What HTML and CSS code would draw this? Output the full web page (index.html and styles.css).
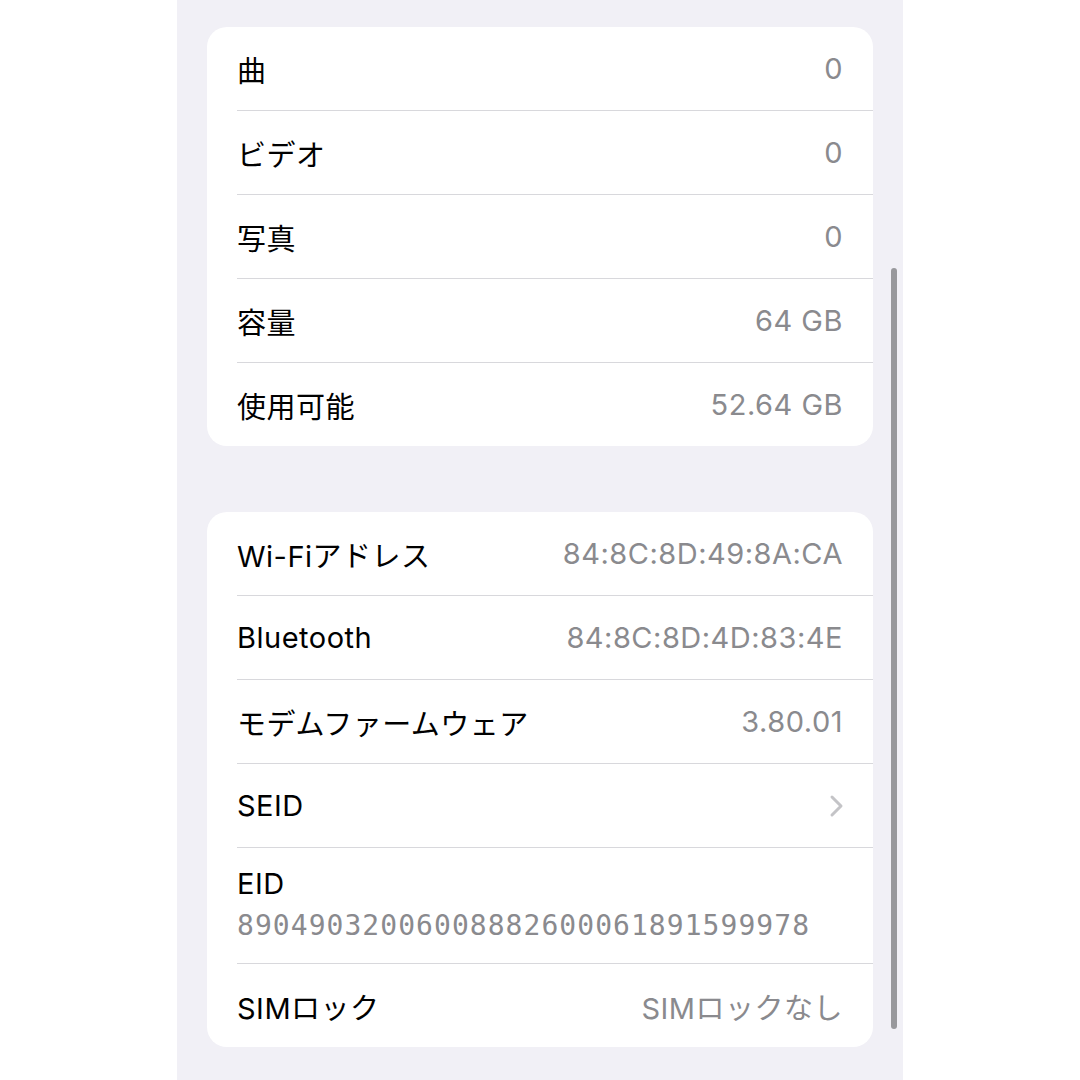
FILE: index.html
```html
<!DOCTYPE html>
<html lang="ja">
<head>
<meta charset="utf-8">
<link rel="stylesheet" href="styles.css">
</head>
<body>
<div class="panel">
  <div class="card">
    <div class="row"><span class="label">曲</span><span class="value">0</span></div>
    <div class="row"><span class="label">ビデオ</span><span class="value">0</span></div>
    <div class="row"><span class="label">写真</span><span class="value">0</span></div>
    <div class="row"><span class="label">容量</span><span class="value">64 GB</span></div>
    <div class="row"><span class="label">使用可能</span><span class="value">52.64 GB</span></div>
  </div>
  <div class="card">
    <div class="row"><span class="label">Wi-Fiアドレス</span><span class="value">84:8C:8D:49:8A:CA</span></div>
    <div class="row"><span class="label">Bluetooth</span><span class="value">84:8C:8D:4D:83:4E</span></div>
    <div class="row"><span class="label">モデムファームウェア</span><span class="value">3.80.01</span></div>
    <div class="row"><span class="label">SEID</span><svg class="chevron" width="16" height="24" viewBox="0 0 16 24"><path d="M3 3 L12 12 L3 21" fill="none" stroke="#c4c4c7" stroke-width="3" stroke-linecap="round" stroke-linejoin="round"/></svg></div>
    <div class="row tall"><span class="label">EID</span><span class="mono">89049032006008882600061891599978</span></div>
    <div class="row"><span class="label">SIMロック</span><span class="value">SIMロックなし</span></div>
  </div>
  <div class="scrollbar"></div>
</div>
</body>
</html>
```

FILE: styles.css
```css
html, body {
  margin: 0;
  padding: 0;
  background: #ffffff;
}
body {
  width: 1080px;
  height: 1080px;
  overflow: hidden;
  font-family: Inter, "Noto Sans CJK JP", sans-serif;
}
.panel {
  position: relative;
  margin-left: 177px;
  width: 726px;
  height: 1080px;
  box-sizing: border-box;
  background: #f1f0f6;
  padding: 27px 30px 0 30px;
  display: flex;
  flex-direction: column;
  gap: 66px;
}
.card {
  background: #ffffff;
  border-radius: 20px;
  overflow: hidden;
}
.row {
  margin-left: 30px;
  padding-right: 30px;
  height: 83px;
  display: flex;
  align-items: center;
  justify-content: space-between;
  border-top: 1px solid #d8d8dc;
}
.row:first-child {
  border-top: none;
}
.row.tall {
  height: 116px;
  box-sizing: border-box;
  padding-bottom: 4px;
  flex-direction: column;
  align-items: flex-start;
  justify-content: center;
  gap: 8px;
}
.label {
  font-size: 29px;
  color: #000000;
  letter-spacing: 0.5px;
}
.value {
  font-size: 29px;
  color: #8a8a8e;
  letter-spacing: 0.5px;
}
.mono {
  font-family: "DejaVu Sans Mono", monospace;
  font-size: 28px;
  color: #8a8a8e;
  letter-spacing: 1.05px;
}
.chevron {
  margin-right: -2px;
}
.scrollbar {
  position: absolute;
  right: 6px;
  top: 268px;
  width: 6px;
  height: 761px;
  border-radius: 3px;
  background: #98989c;
}
```
